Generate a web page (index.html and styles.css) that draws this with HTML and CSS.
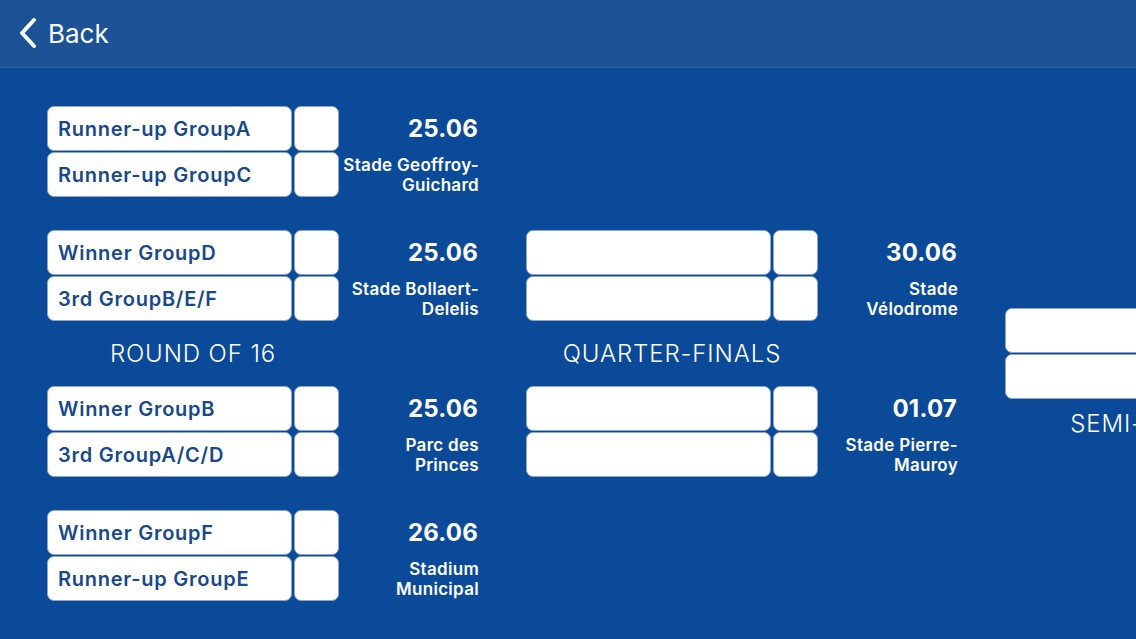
FILE: index.html
```html
<!DOCTYPE html>
<html>
<head>
<meta charset="utf-8">
<link rel="stylesheet" href="styles.css">
</head>
<body>
<header class="topbar">
  <div class="back">
    <svg class="chev" width="20" height="32" viewBox="0 0 20 32"><path d="M16 3 L4 16 L16 29" fill="none" stroke="#fff" stroke-width="4" stroke-linecap="round" stroke-linejoin="round"/></svg>
    <span class="back-text">Back</span>
  </div>
</header>
<main class="bracket">
  <section class="col">
    <div class="match">
      <div class="teams">
        <div class="row"><div class="name">Runner-up GroupA</div><div class="score"></div></div>
        <div class="row"><div class="name">Runner-up GroupC</div><div class="score"></div></div>
      </div>
      <div class="info"><div class="date">25.06</div><div class="venue">Stade Geoffroy-<br>Guichard</div></div>
    </div>
    <div class="match gap">
      <div class="teams">
        <div class="row"><div class="name">Winner GroupD</div><div class="score"></div></div>
        <div class="row"><div class="name">3rd GroupB/E/F</div><div class="score"></div></div>
      </div>
      <div class="info"><div class="date">25.06</div><div class="venue">Stade Bollaert-<br>Delelis</div></div>
    </div>
    <div class="label">ROUND OF 16</div>
    <div class="match">
      <div class="teams">
        <div class="row"><div class="name">Winner GroupB</div><div class="score"></div></div>
        <div class="row"><div class="name">3rd GroupA/C/D</div><div class="score"></div></div>
      </div>
      <div class="info"><div class="date">25.06</div><div class="venue">Parc des<br>Princes</div></div>
    </div>
    <div class="match gap">
      <div class="teams">
        <div class="row"><div class="name">Winner GroupF</div><div class="score"></div></div>
        <div class="row"><div class="name">Runner-up GroupE</div><div class="score"></div></div>
      </div>
      <div class="info"><div class="date">26.06</div><div class="venue">Stadium<br>Municipal</div></div>
    </div>
  </section>
  <section class="col">
    <div class="match">
      <div class="teams">
        <div class="row"><div class="name"></div><div class="score"></div></div>
        <div class="row"><div class="name"></div><div class="score"></div></div>
      </div>
      <div class="info"><div class="date">30.06</div><div class="venue">Stade<br>Vélodrome</div></div>
    </div>
    <div class="label">QUARTER-FINALS</div>
    <div class="match">
      <div class="teams">
        <div class="row"><div class="name"></div><div class="score"></div></div>
        <div class="row"><div class="name"></div><div class="score"></div></div>
      </div>
      <div class="info"><div class="date">01.07</div><div class="venue">Stade Pierre-<br>Mauroy</div></div>
    </div>
  </section>
  <section class="col semi">
    <div class="match">
      <div class="teams">
        <div class="row"><div class="name"></div><div class="score"></div></div>
        <div class="row"><div class="name"></div><div class="score"></div></div>
      </div>
      <div class="info"><div class="date"></div><div class="venue"></div></div>
    </div>
    <div class="label semi-label">SEMI-FINALS</div>
  </section>
</main>
</body>
</html>
```

FILE: styles.css
```css
* { box-sizing: border-box; }
html, body {
  margin: 0;
  width: 1136px;
  height: 639px;
  overflow: hidden;
  background: #0b4a99;
  font-family: Inter, "Noto Sans", sans-serif;
  color: #fff;
}
.topbar {
  height: 68px;
  background: #1b5396;
  border-bottom: 1px solid #2b609f;
  display: flex;
  align-items: center;
  padding-left: 18px;
}
.back {
  display: flex;
  align-items: center;
  gap: 10px;
  margin-top: -1px;
}
.chev { display: block; }
.back-text {
  font-size: 26px;
  font-weight: 400;
}
.bracket {
  height: 571px;
  display: flex;
  align-items: center;
  gap: 48px;
  padding-left: 47px;
}
.col {
  flex: 0 0 431px;
  display: flex;
  flex-direction: column;
}
.semi { padding-top: 48px; }
.match {
  display: flex;
}
.match.gap { margin-top: 33px; }
.teams {
  display: flex;
  flex-direction: column;
  gap: 1px;
}
.row {
  display: flex;
  gap: 2px;
}
.name, .score {
  height: 45px;
  background: #fff;
  border: 1px solid #8ea6c8;
  border-radius: 7px;
  flex-shrink: 0;
}
.name {
  width: 245px;
  color: #17498b;
  font-size: 20px;
  font-weight: 600;
  display: flex;
  align-items: center;
  padding-left: 10px;
  letter-spacing: 0.75px;
  white-space: nowrap;
}
.score { width: 45px; }
.info {
  width: 139px;
  flex-shrink: 0;
  display: flex;
  flex-direction: column;
  align-items: flex-end;
  text-align: right;
}
.date {
  height: 45px;
  display: flex;
  align-items: center;
  font-size: 24px;
  font-weight: 700;
  letter-spacing: 0.2px;
}
.venue {
  height: 46px;
  padding-top: 2px;
  margin-right: -1px;
  display: flex;
  align-items: center;
  font-size: 17px;
  font-weight: 600;
  line-height: 20px;
  letter-spacing: 0.3px;
  white-space: nowrap;
}
.label {
  width: 292px;
  height: 65px;
  display: flex;
  align-items: center;
  justify-content: center;
  font-size: 24px;
  font-weight: 300;
  letter-spacing: 0.9px;
  white-space: nowrap;
}
.semi-label { height: 48px; }
```
